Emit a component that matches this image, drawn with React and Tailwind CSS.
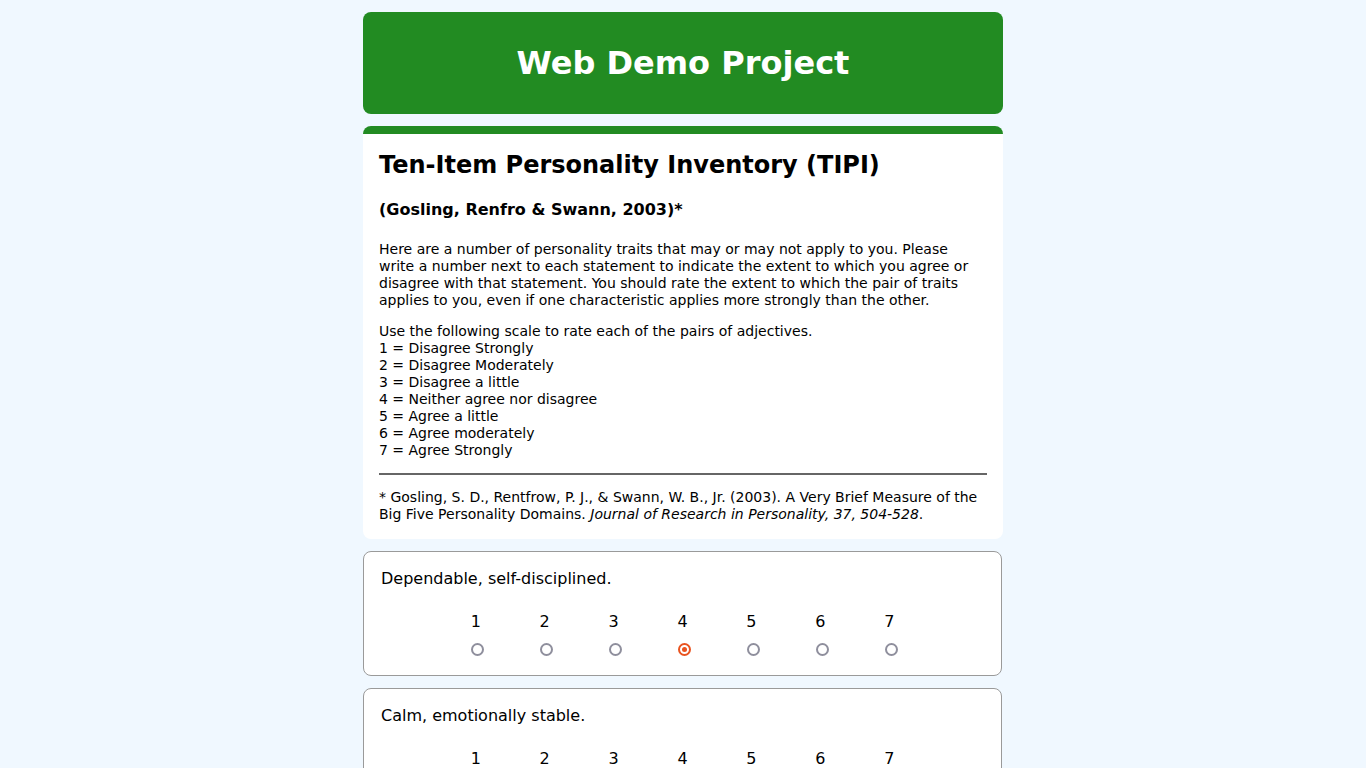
import React from "react";

const font = { fontFamily: '"DejaVu Sans", sans-serif' };

function Radio({ checked }) {
  return (
    <span className="ml-[6px] mr-[2px] inline-flex h-[13px] w-[13px] items-center justify-center">
      {checked ? (
        <span className="flex h-[13px] w-[13px] items-center justify-center rounded-full border-[2px] border-[#e9531f] bg-white">
          <span className="h-[5px] w-[5px] rounded-full bg-[#e9531f]" />
        </span>
      ) : (
        <span className="h-[13px] w-[13px] rounded-full border-[2px] border-[#8f8f9d] bg-white" />
      )}
    </span>
  );
}

function Question({ text, value }) {
  return (
    <div className="w-[639px] rounded-lg border border-[#9a9a9a] bg-white px-[17px] pt-[17px] pb-[19px]">
      <div className="text-[16px] leading-[19px] text-black">{text}</div>
      <div className="mx-auto mt-[24px] grid w-[80%] grid-cols-7">
        {[1, 2, 3, 4, 5, 6, 7].map((n) => (
          <div key={n} className="flex flex-col items-center">
            <div className="text-[16px] leading-[19px] text-black">{n}</div>
            <div className="mt-[12px] flex">
              <Radio checked={value === n} />
            </div>
          </div>
        ))}
      </div>
    </div>
  );
}

export default function App() {
  const items = [
    ["Dependable, self-disciplined.", 4],
    ["Calm, emotionally stable.", 0],
    ["Extraverted, enthusiastic.", 0],
    ["Critical, quarrelsome.", 0],
    ["Anxious, easily upset.", 0],
    ["Open to new experiences, complex.", 0],
    ["Reserved, quiet.", 0],
    ["Sympathetic, warm.", 0],
    ["Disorganized, careless.", 0],
    ["Conventional, uncreative.", 0],
  ];
  return (
    <div className="min-h-screen bg-[#f0f8ff] pt-[12px] pb-[12px]" style={font}>
      <div className="mx-auto flex w-[640px] flex-col gap-[12px]">
        <div className="flex h-[102px] items-center justify-center rounded-lg bg-[#228b22]">
          <h1 className="text-[32px] font-bold leading-[38px] text-white">Web Demo Project</h1>
        </div>

        <div className="rounded-lg border-t-[8px] border-[#228b22] bg-white px-[16px] pt-[17px] pb-[16px] text-black">
          <h2 className="text-[24px] font-bold leading-[28px]">Ten-Item Personality Inventory (TIPI)</h2>
          <h3 className="mt-[21px] text-[16px] font-bold leading-[19px]">(Gosling, Renfro &amp; Swann, 2003)*</h3>
          <p className="mt-[22px] text-[14px] leading-[17px]">
            Here are a number of personality traits that may or may not apply to you. Please write a number next
            to each statement to indicate the extent to which you agree or disagree with that statement. You should
            rate the extent to which the pair of traits applies to you, even if one characteristic applies more
            strongly than the other.
          </p>
          <p className="mt-[14px] text-[14px] leading-[17px]">
            Use the following scale to rate each of the pairs of adjectives.
            <br />1 = Disagree Strongly
            <br />2 = Disagree Moderately
            <br />3 = Disagree a little
            <br />4 = Neither agree nor disagree
            <br />5 = Agree a little
            <br />6 = Agree moderately
            <br />7 = Agree Strongly
          </p>
          <div className="mt-[14px] h-[2px] w-full bg-[#666666]" />
          <p className="mt-[14px] text-[14px] leading-[17px]">
            * Gosling, S. D., Rentfrow, P. J., &amp; Swann, W. B., Jr. (2003). A Very Brief Measure of the Big Five
            Personality Domains. <i>Journal of Research in Personality, 37, 504-528</i>.
          </p>
        </div>

        {items.map(([t, v]) => (
          <Question key={t} text={t} value={v} />
        ))}
      </div>
    </div>
  );
}
